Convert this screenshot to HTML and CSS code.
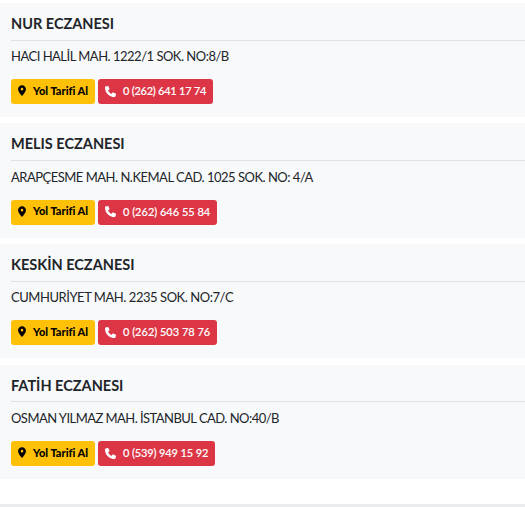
FILE: index.html
```
<!DOCTYPE html>
<html lang="tr">
<head>
  <meta charset="UTF-8">
  <meta name="viewport" content="width=device-width, initial-scale=1.0">
  <title>Nöbetçi Eczaneler</title>
  <link rel="stylesheet" href="styles.css">
</head>
<body>

<!-- Shared icons -->
<svg class="icon-defs" width="0" height="0">
  <symbol id="icon-pin" viewBox="0 0 384 512">
    <path d="M215.700 499.200C267 435 384 279.400 384 192C384 86 298 0 192 0S0 86 0 192c0 87.400 117 243 168.300 307.200c12.300 15.300 35.100 15.300 47.400 0zM192 128a64 64 0 1 1 0 128 64 64 0 1 1 0-128z"/>
  </symbol>
  <symbol id="icon-phone" viewBox="0 0 512 512">
    <path d="M164.900 24.600c-7.700-18.600-28-28.500-47.400-23.200l-88 24C12.100 30.200 0 46 0 64C0 311.400 200.600 512 448 512c18 0 33.800-12.100 38.600-29.500l24-88c5.300-19.400-4.600-39.700-23.200-47.400l-96-40c-16.300-6.800-35.200-2.100-46.300 11.600L304.700 368C234.300 334.700 177.300 277.700 144 207.300L193.300 167c13.700-11.200 18.400-30 11.600-46.300l-40-96z"/>
  </symbol>
</svg>

<div class="pharmacy-list">
  <div class="pharmacy nur">
    <h2>NUR ECZANESI</h2>
    <p>HACI HALİL MAH. 1222/1 SOK. NO:8/B</p>
    <div class="actions">
      <a class="btn btn-map" href="#"><svg class="pin"><use href="#icon-pin"/></svg><span>Yol Tarifi Al</span></a>
      <a class="btn btn-phone" href="tel:02626411774"><svg class="phone"><use href="#icon-phone"/></svg><span>0 (262) 641 17 74</span></a>
    </div>
  </div>

  <div class="pharmacy">
    <h2>MELIS ECZANESI</h2>
    <p>ARAPÇESME MAH. N.KEMAL CAD. 1025 SOK. NO: 4/A</p>
    <div class="actions">
      <a class="btn btn-map" href="#"><svg class="pin"><use href="#icon-pin"/></svg><span>Yol Tarifi Al</span></a>
      <a class="btn btn-phone" href="tel:02626465584"><svg class="phone"><use href="#icon-phone"/></svg><span>0 (262) 646 55 84</span></a>
    </div>
  </div>

  <div class="pharmacy keskin">
    <h2>KESKİN ECZANESI</h2>
    <p>CUMHURİYET MAH. 2235 SOK. NO:7/C</p>
    <div class="actions">
      <a class="btn btn-map" href="#"><svg class="pin"><use href="#icon-pin"/></svg><span>Yol Tarifi Al</span></a>
      <a class="btn btn-phone" href="tel:02625037876"><svg class="phone"><use href="#icon-phone"/></svg><span>0 (262) 503 78 76</span></a>
    </div>
  </div>

  <div class="pharmacy fatih">
    <h2>FATİH ECZANESI</h2>
    <p>OSMAN YILMAZ MAH. İSTANBUL CAD. NO:40/B</p>
    <div class="actions">
      <a class="btn btn-map" href="#"><svg class="pin"><use href="#icon-pin"/></svg><span>Yol Tarifi Al</span></a>
      <a class="btn btn-phone" href="tel:05399491592"><svg class="phone"><use href="#icon-phone"/></svg><span>0 (539) 949 15 92</span></a>
    </div>
  </div>
</div>

</body>
</html>
```

FILE: styles.css
```
* {
  box-sizing: border-box;
}

body {
  margin: 0;
  font-family: Lato, "Liberation Sans", sans-serif;
  color: #212529;
  background-color: #fff;
  overflow: hidden;
}

.icon-defs {
  display: block;
}

.pharmacy-list {
  display: flex;
  flex-direction: column;
  gap: 6.4px;
  padding: 2.8px 0 25.3px;
  border-bottom: 3px solid #e9ecef;
}

.pharmacy {
  height: 114.2px;
  padding: 10px 0 0 11px;
  background-color: #f8f9fa;
}

.pharmacy h2 {
  height: 27.9px;
  margin: 0;
  font-size: 14.5px;
  font-weight: 700;
  line-height: 22px;
  white-space: nowrap;
  border-bottom: 1px solid #dee2e6;
}

.pharmacy p {
  margin: 5.6px 0 13px;
  font-size: 13px;
  line-height: 20px;
  letter-spacing: -0.5px;
  white-space: nowrap;
}

.actions {
  display: flex;
  gap: 3px;
}

.btn {
  display: flex;
  align-items: center;
  height: 25px;
  padding-left: 7px;
  font-size: 11px;
  line-height: 16px;
  white-space: nowrap;
  text-decoration: none;
  border-radius: 3px;
}

.btn-map {
  width: 84px;
  padding-bottom: 2px;
  font-weight: 900;
  color: #000;
  background-color: #ffc107;
}

.btn-phone {
  width: 119px;
  padding-bottom: 1px;
  font-weight: 500;
  color: #fff;
  background-color: #dc3545;
  -webkit-text-stroke: 0.15px #fff;
}

.btn svg {
  fill: currentColor;
}

.pin {
  width: 8px;
  height: 11px;
  margin-right: 7px;
}

.phone {
  width: 11px;
  height: 11px;
  margin-right: 7px;
}

.nur .btn-phone {
  width: 115px;
  letter-spacing: -0.24px;
}

.keskin p {
  letter-spacing: -0.45px;
}

.fatih p {
  letter-spacing: -0.54px;
}

.fatih .btn-phone {
  width: 117px;
  letter-spacing: -0.12px;
}
```
